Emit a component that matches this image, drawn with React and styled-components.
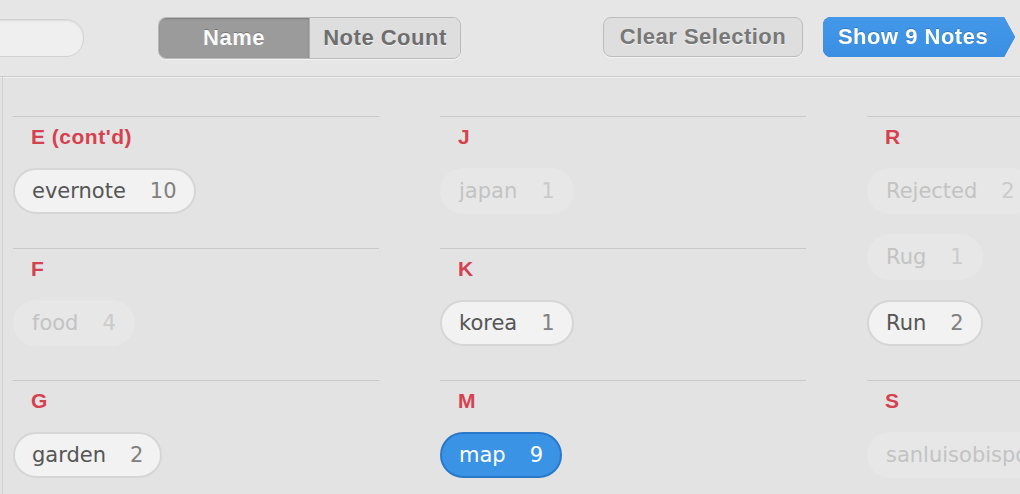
import React from 'react'
import styled, { createGlobalStyle } from 'styled-components'

const GlobalStyle = createGlobalStyle`
  html, body {
    margin: 0;
    padding: 0;
    background: #e3e3e3;
    overflow: hidden;
  }
  body {
    font-family: "DejaVu Sans", "Liberation Sans", sans-serif;
  }
`

const columns = [
    [
        { letter: "E (cont'd)", tags: [{ name: 'evernote', count: 10 }] },
        { letter: 'F', tags: [{ name: 'food', count: 4, dim: true }] },
        { letter: 'G', tags: [{ name: 'garden', count: 2 }] },
    ],
    [
        { letter: 'J', tags: [{ name: 'japan', count: 1, dim: true }] },
        { letter: 'K', tags: [{ name: 'korea', count: 1 }] },
        { letter: 'M', tags: [{ name: 'map', count: 9, active: true }] },
    ],
    [
        {
            letter: 'R',
            tags: [
                { name: 'Rejected', count: 2, dim: true },
                { name: 'Rug', count: 1, dim: true },
                { name: 'Run', count: 2 },
            ],
        },
        { letter: 'S', tags: [{ name: 'sanluisobispo', count: 1, dim: true }] },
    ],
]

const App = () => {
    return (
        <StPage>
            <GlobalStyle />
            <StTopBar>
                <StSearch />
                <StSegmented>
                    <StSegment $selected>Name</StSegment>
                    <StSegment>Note Count</StSegment>
                </StSegmented>
                <StSpacer />
                <StClearButton>Clear Selection</StClearButton>
                <StShowWrap>
                    <StShowButton>Show 9 Notes</StShowButton>
                </StShowWrap>
            </StTopBar>
            <StContent>
                {columns.map((sections, i) => (
                    <StColumn key={i}>
                        {sections.map((section) => (
                            <StSection key={section.letter}>
                                <StLetter>{section.letter}</StLetter>
                                <StTagList>
                                    {section.tags.map((tag) => (
                                        <StTag key={tag.name} $dim={tag.dim} $active={tag.active}>
                                            <span>{tag.name}</span>
                                            <StCount $dim={tag.dim} $active={tag.active}>{tag.count}</StCount>
                                        </StTag>
                                    ))}
                                </StTagList>
                            </StSection>
                        ))}
                    </StColumn>
                ))}
            </StContent>
        </StPage>
    )
}

export default App

const StPage = styled.div`
  width: 1020px;
  height: 494px;
  overflow: hidden;
  background: #e3e3e3;
`

const StTopBar = styled.div`
  display: flex;
  align-items: flex-start;
  height: 77px;
  padding-top: 17px;
  box-sizing: border-box;
  background: #e6e6e6;
  border-bottom: 1px solid #cdcdcd;
  box-shadow: 0 1px 0 #f0f0f0;
  font-family: "Liberation Sans", Arial, sans-serif;
  font-weight: bold;
  font-size: 22px;
  letter-spacing: 0.5px;
`

const StSearch = styled.div`
  width: 120px;
  height: 36px;
  margin-left: -38px;
  margin-top: 2px;
  border-radius: 18px;
  background: #efefef;
  border: 1px solid #d2d2d2;
  box-shadow: inset 0 1px 2px rgba(0, 0, 0, 0.08);
`

const StSegmented = styled.div`
  display: flex;
  margin-left: 74px;
  height: 40px;
  border: 1px solid #b9b9b9;
  border-radius: 8px;
  overflow: hidden;
  box-shadow: 0 1px 0 #f3f3f3;
`

const StSegment = styled.div`
  width: 150px;
  display: flex;
  align-items: center;
  justify-content: center;
  background: ${(p) => (p.$selected ? '#9b9b9b' : '#dedede')};
  color: ${(p) => (p.$selected ? '#fafafa' : '#6e6e6e')};
  text-shadow: ${(p) => (p.$selected ? '0 -1px 0 rgba(0,0,0,0.25)' : '0 1px 0 #f2f2f2')};
  box-shadow: ${(p) => (p.$selected ? 'inset 0 1px 2px rgba(0,0,0,0.2)' : 'none')};
  & + & {
    border-left: 1px solid #b0b0b0;
  }
`

const StSpacer = styled.div`
  flex: 1;
`

const StClearButton = styled.div`
  width: 200px;
  height: 40px;
  box-sizing: border-box;
  display: flex;
  align-items: center;
  justify-content: center;
  background: #dedede;
  border: 1px solid #bcbcbc;
  border-radius: 8px;
  color: #787878;
  text-shadow: 0 1px 0 #f2f2f2;
  box-shadow: 0 1px 0 #f3f3f3;
`

const StShowWrap = styled.div`
  margin-left: 20px;
  margin-right: 5px;
  filter: drop-shadow(0 0 0.7px #2767ad);
`

const StShowButton = styled.div`
  width: 192px;
  height: 40px;
  box-sizing: border-box;
  padding-right: 12px;
  display: flex;
  align-items: center;
  justify-content: center;
  background: linear-gradient(#4398ea, #3a8fe2);
  border-radius: 8px 0 0 8px;
  color: #ffffff;
  text-shadow: 0 -1px 0 rgba(0, 0, 0, 0.2);
  clip-path: polygon(0 0, calc(100% - 11px) 0, 100% 50%, calc(100% - 11px) 100%, 0 100%);
`

const StContent = styled.div`
  display: flex;
  gap: 61px;
  margin-left: 2px;
  padding-left: 10px;
  padding-top: 39px;
  border-left: 1px solid #d0d0d0;
  height: 500px;
`

const StColumn = styled.div`
  width: 366px;
  flex-shrink: 0;
`

const StSection = styled.div`
  border-top: 1px solid #c9c9c9;
`

const StLetter = styled.div`
  height: 51px;
  padding-left: 18px;
  line-height: 40px;
  font-family: "Liberation Sans", Arial, sans-serif;
  font-weight: bold;
  font-size: 21px;
  letter-spacing: 0.5px;
  color: #d6414f;
`

const StTagList = styled.div`
  display: flex;
  flex-direction: column;
  align-items: flex-start;
  gap: 20px;
  padding-bottom: 34px;
`

const StTag = styled.div`
  height: 46px;
  box-sizing: border-box;
  display: flex;
  align-items: center;
  gap: 24px;
  padding: 0 17px;
  border-radius: 23px;
  font-size: 21px;
  white-space: nowrap;
  background: ${(p) => (p.$active ? '#3b93e6' : p.$dim ? '#e7e7e7' : '#f2f2f2')};
  border: 2px solid ${(p) => (p.$active ? '#2a78c9' : p.$dim ? 'transparent' : '#d6d6d6')};
  color: ${(p) => (p.$active ? '#ffffff' : p.$dim ? '#c3c3c3' : '#555555')};
`

const StCount = styled.span`
  color: ${(p) => (p.$active ? '#ffffff' : p.$dim ? '#cbcbcb' : '#808080')};
`
